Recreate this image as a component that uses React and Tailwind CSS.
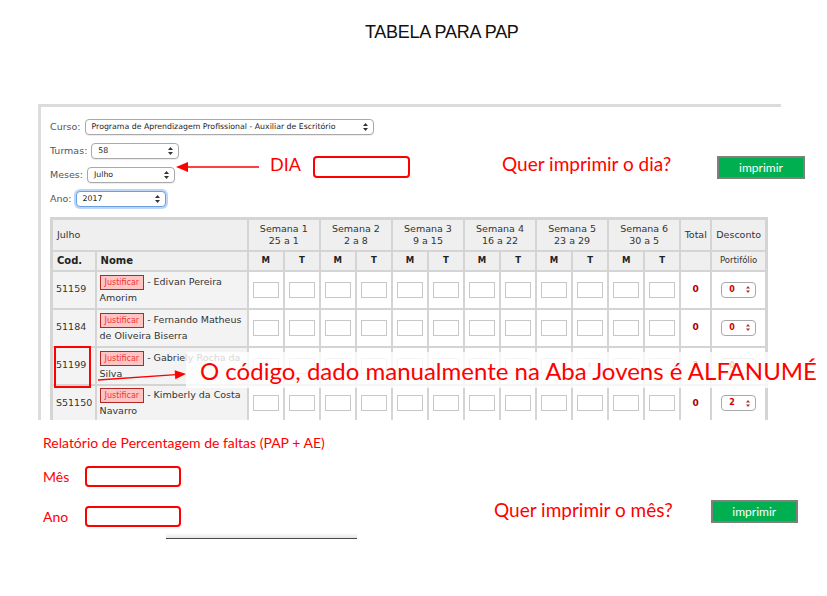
import React from "react";

const Arrows = () => (
  <svg width="5" height="8" viewBox="0 0 5 8" className="shrink-0">
    <polygon points="2.5,0 5,3 0,3" fill="#333" />
    <polygon points="0,5 5,5 2.5,8" fill="#333" />
  </svg>
);

const Select = ({ w, children, focus }) => (
  <div
    className={
      "flex items-center justify-between h-[16px] rounded-[4px] bg-white pl-[6px] pr-[5px] text-[7.8px] text-[#222] " +
      (focus
        ? "border border-[#6b9fe0] shadow-[0_0_0_2px_#bcd6f7]"
        : "border border-[#a9a9a9] shadow-[0_1px_1px_rgba(0,0,0,0.08)]")
    }
    style={{ width: w }}
  >
    <span className="whitespace-nowrap">{children}</span>
    <Arrows />
  </div>
);

const Field = ({ label, w, value, focus }) => (
  <div className="flex items-center gap-[4px] h-[16px]">
    <span className="text-[9.5px] text-[#555]">{label}</span>
    <Select w={w} focus={focus}>{value}</Select>
  </div>
);

const Box = ({ v }) => (
  <td className="border-2 border-[#d4d4d4] bg-white text-center align-middle">
    <div className="mx-auto w-[26px] h-[16px] border border-[#c8c8c8] bg-white text-[7px] text-[#b44] leading-[14px]">
      {v || ""}
    </div>
  </td>
);

const MiniSelect = ({ v }) => (
  <div className="mx-auto flex items-center justify-between w-[35px] h-[16px] rounded-[4px] border border-[#a9a9a9] bg-white pl-[7px] pr-[5px] text-[8px] font-bold text-[#c00]">
    <span>{v}</span>
    <svg width="4" height="7" viewBox="0 0 4 7">
      <polygon points="2,0 4,2.5 0,2.5" fill="#a33" />
      <polygon points="0,4.5 4,4.5 2,7" fill="#a33" />
    </svg>
  </div>
);

const rows = [
  { cod: "51159", l1: "- Edivan Pereira", l2: "Amorim", total: "0", desc: "0" },
  { cod: "51184", l1: "- Fernando Matheus", l2: "de Oliveira Biserra", total: "0", desc: "0" },
  { cod: "51199", l1: "- Gabriely Rocha da", l2: "Silva", total: "2", desc: "0", f: true },
  { cod: "S51150", l1: "- Kimberly da Costa", l2: "Navarro", total: "0", desc: "2" },
];

const semanas = [
  ["Semana 1", "25 a 1"],
  ["Semana 2", "2 a 8"],
  ["Semana 3", "9 a 15"],
  ["Semana 4", "16 a 22"],
  ["Semana 5", "23 a 29"],
  ["Semana 6", "30 a 5"],
];

const cell = "border-2 border-[#d4d4d4]";

export default function App() {
  return (
    <div className="relative w-[827px] h-[596px] overflow-hidden bg-white font-['Lato',sans-serif]">
      {/* Title */}
      <div className="pt-[21px] pl-[365px] h-[43px] text-[18px] leading-[22px] text-[#111] font-['Liberation_Sans',sans-serif] tracking-[-0.3px]">
        TABELA PARA PAP
      </div>

      {/* Embedded screenshot */}
      <div className="mt-[61px] ml-[38px] w-[743px] h-[316px] border-t-[3px] border-l-[3px] border-[#dcdcdc] overflow-hidden pt-[12px] pl-[9px] font-['DejaVu_Sans',Verdana,sans-serif]">
        <div className="flex flex-col gap-[8px]">
          <Field label="Curso:" w={289} value="Programa de Aprendizagem Profissional - Auxiliar de Escritório" />
          <Field label="Turmas:" w={88} value="58" />
          <Field label="Meses:" w={88} value="Julho" />
          <Field label="Ano:" w={90} value="2017" focus />
        </div>

        <table className="mt-[10px] border-collapse table-fixed w-[718px] border-[3px] border-[#d4d4d4] text-[10px] text-[#333]">
          <colgroup>
            <col className="w-[44px]" />
            <col className="w-[152px]" />
            {Array.from({ length: 12 }).map((_, i) => (
              <col key={i} className="w-[36px]" />
            ))}
            <col className="w-[31px]" />
            <col className="w-[55px]" />
          </colgroup>
          <thead>
            <tr className="h-[32px] bg-[#efefef]">
              <td colSpan={2} className={cell + " pl-[4px] text-[9.5px]"}>Julho</td>
              {semanas.map(([a, b]) => (
                <td key={a} colSpan={2} className={cell + " text-center leading-[12px] text-[9.5px]"}>
                  <div>{a}</div>
                  <div>{b}</div>
                </td>
              ))}
              <td className={cell + " text-center text-[9.5px]"}>Total</td>
              <td className={cell + " text-center text-[9.5px]"}>Desconto</td>
            </tr>
            <tr className="h-[20px] bg-[#efefef]">
              <td className={cell + " pl-[4px] font-bold text-[#222]"}>Cod.</td>
              <td className={cell + " pl-[4px] font-bold text-[#222]"}>Nome</td>
              {Array.from({ length: 12 }).map((_, i) => (
                <td key={i} className={cell + " text-center font-bold text-[8.5px] text-[#222]"}>
                  {i % 2 === 0 ? "M" : "T"}
                </td>
              ))}
              <td className={cell}></td>
              <td className={cell + " text-center text-[8.5px]"}>Portifólio</td>
            </tr>
          </thead>
          <tbody>
            {rows.map((r) => (
              <tr key={r.cod} className="h-[38px]">
                <td className={cell + " bg-[#f3f3f3] pl-[3px] text-[9.5px]"}>{r.cod}</td>
                <td className={cell + " bg-[#f3f3f3] pl-[3px] leading-[16px] text-[9.5px]"}>
                  <div className="whitespace-nowrap">
                    <span className="inline-block align-middle border border-[#b02828] bg-[#ffc4c4] text-[#f03535] text-[8px] leading-[13px] px-[4px] mr-[3px]">
                      Justificar
                    </span>
                    {r.l1}
                  </div>
                  <div className="whitespace-nowrap">{r.l2}</div>
                </td>
                {Array.from({ length: 12 }).map((_, i) => (
                  <Box key={i} v={r.f && (i === 8 || i === 9) ? "F" : ""} />
                ))}
                <td className={cell + " text-center font-bold text-[9px] text-[#a00]"}>{r.total}</td>
                <td className={cell + " text-center"}>
                  <MiniSelect v={r.desc} />
                </td>
              </tr>
            ))}
          </tbody>
        </table>
      </div>

      {/* Bottom annotations */}
      <div className="pl-[43px] pt-[14px] text-[#ff0000]">
        <div className="text-[14px] leading-[18px]">Relatório de Percentagem de faltas (PAP + AE)</div>
        <div className="mt-[13px] flex items-center h-[22px]">
          <span className="w-[42px] text-[14px]">Mês</span>
          <div className="w-[96px] h-[21px] border-2 border-[#ff0000] rounded-[4px]"></div>
        </div>
        <div className="mt-[18px] flex items-center h-[22px]">
          <span className="w-[42px] text-[14px]">Ano</span>
          <div className="w-[96px] h-[21px] border-2 border-[#ff0000] rounded-[4px]"></div>
          <span className="ml-[313px] -mt-[12px] text-[19px] whitespace-nowrap">Quer imprimir o mês?</span>
          <div className="ml-[38px] -mt-[9px] w-[87px] h-[23px] bg-[#00b050] border-2 border-[#7f7f7f] flex items-center justify-center text-white text-[12px]">
            imprimir
          </div>
        </div>
        <div className="mt-[6px] ml-[123px] w-[191px] h-[6px] bg-gradient-to-b from-white to-[#e6e6e6] border-b border-[#4a4a4a]"></div>
      </div>

      {/* Overlays on the screenshot */}
      <svg className="absolute left-[176px] top-[161px]" width="84" height="12" viewBox="0 0 84 12">
        <polygon points="0,6 12,1 12,11" fill="#ff0000" />
        <line x1="11" y1="6" x2="83" y2="6" stroke="#ff0000" strokeWidth="1.4" />
      </svg>
      <div className="absolute left-[270px] top-[152px] text-[18px] leading-[24px] text-[#ff0000]">DIA</div>
      <div className="absolute left-[313px] top-[156px] w-[97px] h-[22px] border-2 border-[#ff0000] rounded-[4px]"></div>
      <div className="absolute left-[502px] top-[152px] text-[19px] leading-[24px] text-[#ff0000] whitespace-nowrap">
        Quer imprimir o dia?
      </div>
      <div className="absolute left-[717px] top-[156px] w-[88px] h-[23px] bg-[#00b050] border-2 border-[#7f7f7f] flex items-center justify-center text-white text-[12px]">
        imprimir
      </div>

      <div className="absolute left-[54px] top-[346px] w-[37px] h-[42px] border-2 border-[#ff0000]"></div>
      <div className="absolute left-[186px] top-[352px] w-[631px] h-[36px] bg-white/80 overflow-hidden">
        <div className="pl-[14px] pt-[3px] text-[24px] leading-[32px] text-[#ff0000] whitespace-nowrap">
          O código, dado manualmente na Aba Jovens é ALFANUMÉRICO
        </div>
      </div>
      <svg className="absolute left-[96px] top-[366px]" width="94" height="18" viewBox="0 0 94 18">
        <line x1="2" y1="14" x2="80" y2="8.7" stroke="#ff0000" strokeWidth="1.3" />
        <polygon points="90,8 78.7,4.2 79.3,13.2" fill="#ff0000" />
      </svg>
    </div>
  );
}
